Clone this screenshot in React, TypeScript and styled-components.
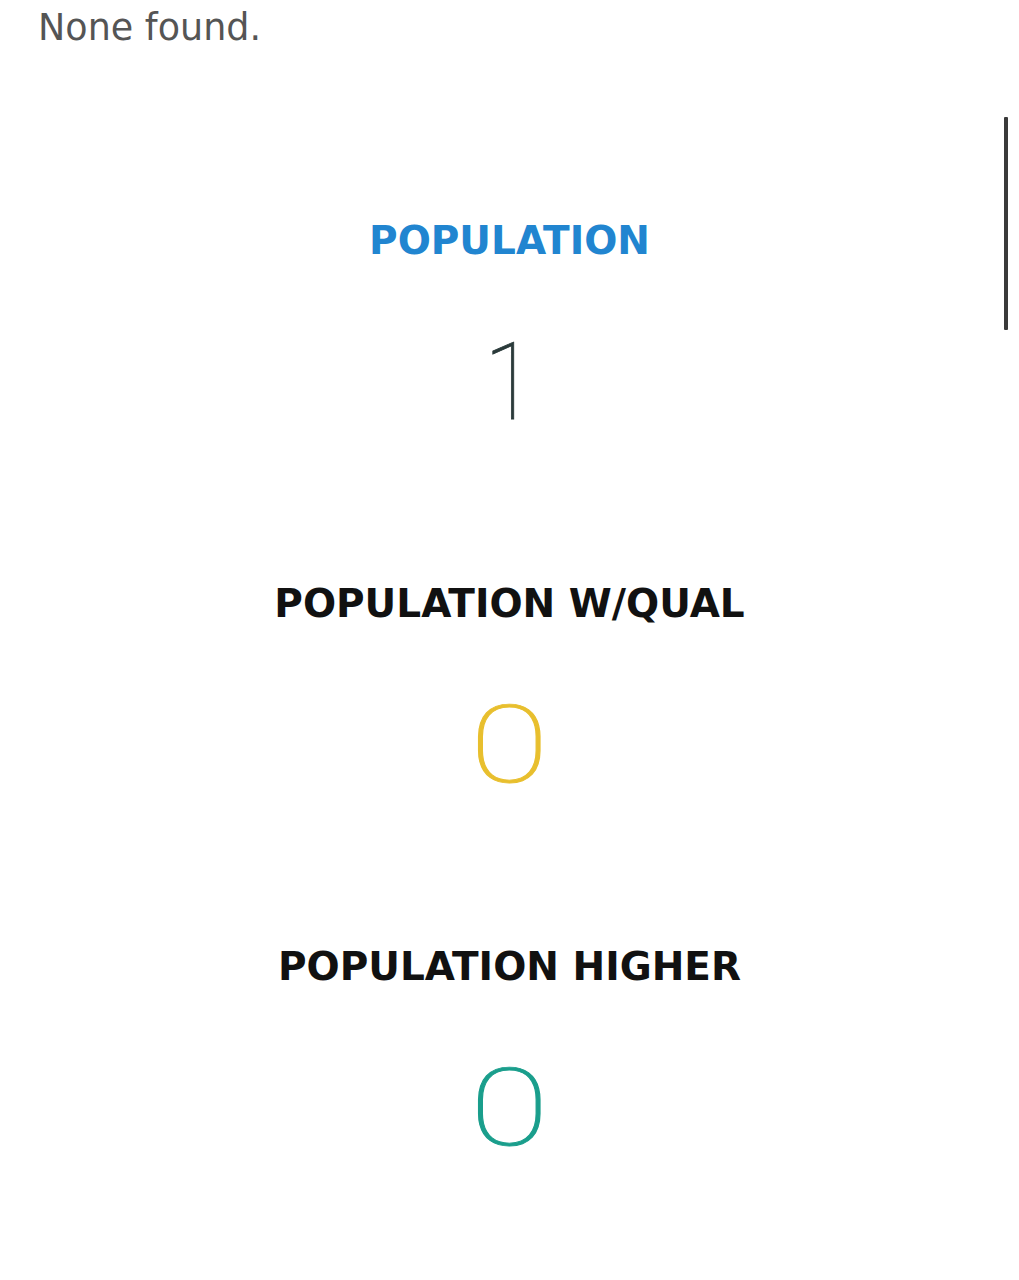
import React from "react";
import styled, { createGlobalStyle } from "styled-components";

const Global = createGlobalStyle`
  html, body { margin: 0; padding: 0; background: #ffffff; }
  body { font-family: "DejaVu Sans", "Noto Sans", sans-serif; }
`;

const Page = styled.div`
  width: 1019px;
  min-height: 1280px;
  display: flex;
  flex-direction: column;
`;

const Message = styled.p`
  margin: 8px 0 0 0;
  padding-left: 38px;
  font-size: 36.5px;
  line-height: 40px;
  color: #555555;
  font-weight: 400;
`;

const Section = styled.section`
  margin-top: 69px;
  display: grid;
  grid-template-columns: 15px 1fr 15px;
`;

const Stats = styled.div`
  grid-column: 2;
  padding-top: 104px;
  display: flex;
  flex-direction: column;
  align-items: center;
  gap: 148px;
`;

const Rail = styled.div`
  grid-column: 3;
  grid-row: 1;
  width: 4px;
  height: 213px;
  background: #3a3a3a;
  border-radius: 1px;
`;

const Stat = styled.div`
  display: flex;
  flex-direction: column;
  align-items: center;
  gap: 68px;
`;

const Label = styled.div<{ $color: string }>`
  font-family: "DejaVu Sans", sans-serif;
  font-weight: 700;
  font-size: 39px;
  line-height: 40px;
  text-transform: uppercase;
  color: ${(p) => p.$color};
`;

const Value = styled.div<{ $color: string; $stretch: number }>`
  font-family: Roboto, "Noto Sans", sans-serif;
  font-weight: 100;
  font-size: 107px;
  line-height: 107px;
  color: ${(p) => p.$color};
  -webkit-text-stroke: 0.9px ${(p) => p.$color};
  transform: scaleX(${(p) => p.$stretch});
`;

const stats = [
  { label: "Population", labelColor: "#2185d0", value: "1", valueColor: "#2a3a3a", stretch: 0.85 },
  { label: "Population w/qual", labelColor: "#111111", value: "0", valueColor: "#e8bf2e", stretch: 1.35 },
  { label: "Population higher", labelColor: "#111111", value: "0", valueColor: "#1a9e8c", stretch: 1.35 },
];

export default function App() {
  return (
    <Page>
      <Global />
      <Message>None found.</Message>
      <Section>
        <Stats>
          {stats.map((s) => (
            <Stat key={s.label}>
              <Label $color={s.labelColor}>{s.label}</Label>
              <Value $color={s.valueColor} $stretch={s.stretch}>
                {s.value}
              </Value>
            </Stat>
          ))}
        </Stats>
        <Rail />
      </Section>
    </Page>
  );
}
